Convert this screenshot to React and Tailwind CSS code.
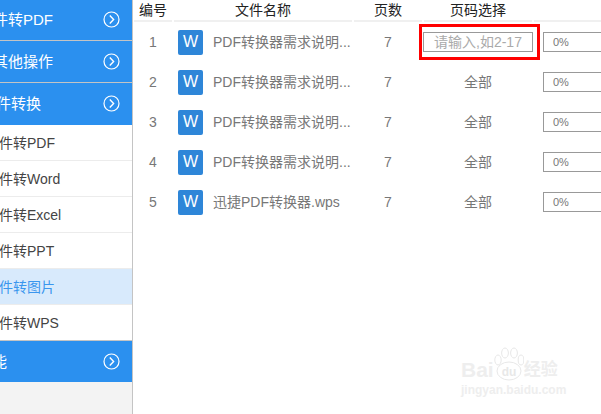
import React from 'react';

const font = { fontFamily: '"Liberation Sans", "Noto Sans CJK SC", sans-serif' };

const subItems = [
  { label: '文件转PDF' },
  { label: '文件转Word' },
  { label: '文件转Excel' },
  { label: '文件转PPT' },
  { label: '文件转图片', active: true },
  { label: '文件转WPS', last: true },
];

const files = [
  { id: 1, name: 'PDF转换器需求说明...', input: true },
  { id: 2, name: 'PDF转换器需求说明...' },
  { id: 3, name: 'PDF转换器需求说明...' },
  { id: 4, name: 'PDF转换器需求说明...' },
  { id: 5, name: '迅捷PDF转换器.wps' },
];

const Chevron = () => (
  <svg width="17" height="17" viewBox="0 0 17 17" fill="none" stroke="white" className="shrink-0">
    <circle cx="8.5" cy="8.5" r="7.5" strokeWidth="1.2" />
    <path d="M6.8 4.6 L10.6 8.5 L6.8 12.4" strokeWidth="1.4" />
  </svg>
);

const BlueRow = ({ children, className }) => (
  <div className={`flex shrink-0 items-center justify-between overflow-hidden bg-[#2b90ef] pr-[12px] text-[15px] text-white ${className}`}>
    {children}
    <Chevron />
  </div>
);

const Sidebar = () => (
  <aside className="flex h-full w-[133px] shrink-0 flex-col overflow-hidden border-r border-[#c4c4c4] bg-[#f3f3f3]">
    <BlueRow className="h-[40px] pb-[1px]"><span className="ml-[-22px] mt-[2px] whitespace-nowrap">文件转PDF</span></BlueRow>
    <div className="h-[1px] shrink-0 bg-[#c4c4c4]" />
    <BlueRow className="h-[41px]"><span className="ml-[-7px] mt-[2px] whitespace-nowrap">其他操作</span></BlueRow>
    <div className="h-[1px] shrink-0 bg-[#c4c4c4]" />
    <BlueRow className="h-[42px] pb-[1px]"><span className="ml-[-19px] mt-[2px] whitespace-nowrap">文件转换</span></BlueRow>
    {subItems.map((item) => (
      <div
        key={item.label}
        className={`flex h-[36px] shrink-0 items-center border-b text-[14px] ${item.last ? 'border-[#c4c4c4]' : 'border-[#ececec]'} ${item.active ? 'bg-[#d8eafc] text-[#3a96ee]' : 'bg-white text-[#444]'}`}
      >
        <span className="ml-[-15px] mt-[2px] whitespace-nowrap">{item.label}</span>
      </div>
    ))}
    <BlueRow className="h-[41px]"><span className="ml-[-23px] mt-[2px] whitespace-nowrap">功能</span></BlueRow>
  </aside>
);

const HeaderCell = ({ className, children }) => (
  <div className={`h-[22px] shrink-0 border-b-2 border-[#f0f0f0] text-center text-[14px] leading-[20px] text-[#222] ${className}`}>
    {children}
  </div>
);

const FileRow = ({ file }) => (
  <div className="flex h-[40px] items-center text-[14px] text-[#777]">
    <div className="w-[38px] shrink-0 text-center">{file.id}</div>
    <div className="ml-[2px] flex w-[178px] shrink-0 items-center">
      <div className="ml-[4px] flex h-[25px] w-[25px] items-center justify-center rounded-[2px] bg-[#2e86d8] text-[16px] text-white">W</div>
      <div className="ml-[10px] mt-[1px] whitespace-nowrap">{file.name}</div>
    </div>
    <div className="ml-[2px] w-[68px] shrink-0 text-center">7</div>
    <div className="ml-[2px] flex w-[108px] shrink-0 justify-center">
      {file.input ? (
        <div className="h-[20px] w-[110px] shrink-0 border border-[#999] text-center leading-[18px] text-[#aaa]">请输入,如2-17</div>
      ) : (
        <span className="mt-[1px]">全部</span>
      )}
    </div>
    <div className="ml-[11px] h-[20px] w-[80px] shrink-0 border border-[#999] pl-[9px] text-[11px] leading-[18px]">0%</div>
  </div>
);

const Watermark = () => (
  <div className="pointer-events-none absolute left-[461px] top-[347px] w-[112px] text-[#eeeeee]">
    <div className="flex items-end text-[21px] font-bold leading-[22px]">
      <span>Bai</span>
      <svg width="30" height="36" viewBox="0 0 30 36" fill="white" stroke="#e8e8e8" className="mb-[-2px]">
        <ellipse cx="15" cy="24" rx="12" ry="9" />
        <ellipse cx="4" cy="13" rx="3.2" ry="5" />
        <ellipse cx="11" cy="6" rx="3.4" ry="5" />
        <ellipse cx="20" cy="6" rx="3.4" ry="5" />
        <ellipse cx="27" cy="13" rx="2.8" ry="5" />
        <text x="15" y="29" textAnchor="middle" fontSize="12" fontWeight="700" fill="#e8e8e8" stroke="none">du</text>
      </svg>
      <span className="text-[17px]">经验</span>
    </div>
    <div className="mt-[3px] whitespace-nowrap text-[12px] font-bold leading-[13px]">jingyan.baidu.com</div>
  </div>
);

export default function App() {
  return (
    <div className="relative flex h-[414px] w-[601px] overflow-hidden bg-white" style={font}>
      <Sidebar />
      <main className="min-w-0 flex-1 overflow-hidden">
        <div className="flex w-[600px] pl-[1px]">
          <HeaderCell className="w-[38px]">编号</HeaderCell>
          <HeaderCell className="ml-[2px] w-[178px]">文件名称</HeaderCell>
          <HeaderCell className="ml-[2px] w-[68px]">页数</HeaderCell>
          <HeaderCell className="ml-[2px] w-[108px]">页码选择</HeaderCell>
          <HeaderCell className="ml-[2px] w-[90px]" />
        </div>
        <div className="w-[600px] pl-[1px]">
          {files.map((file) => <FileRow key={file.id} file={file} />)}
        </div>
      </main>
      <div className="pointer-events-none absolute left-[419px] top-[24px] h-[36px] w-[121px] border-[3px] border-[#ff0000]" />
      <Watermark />
    </div>
  );
}
